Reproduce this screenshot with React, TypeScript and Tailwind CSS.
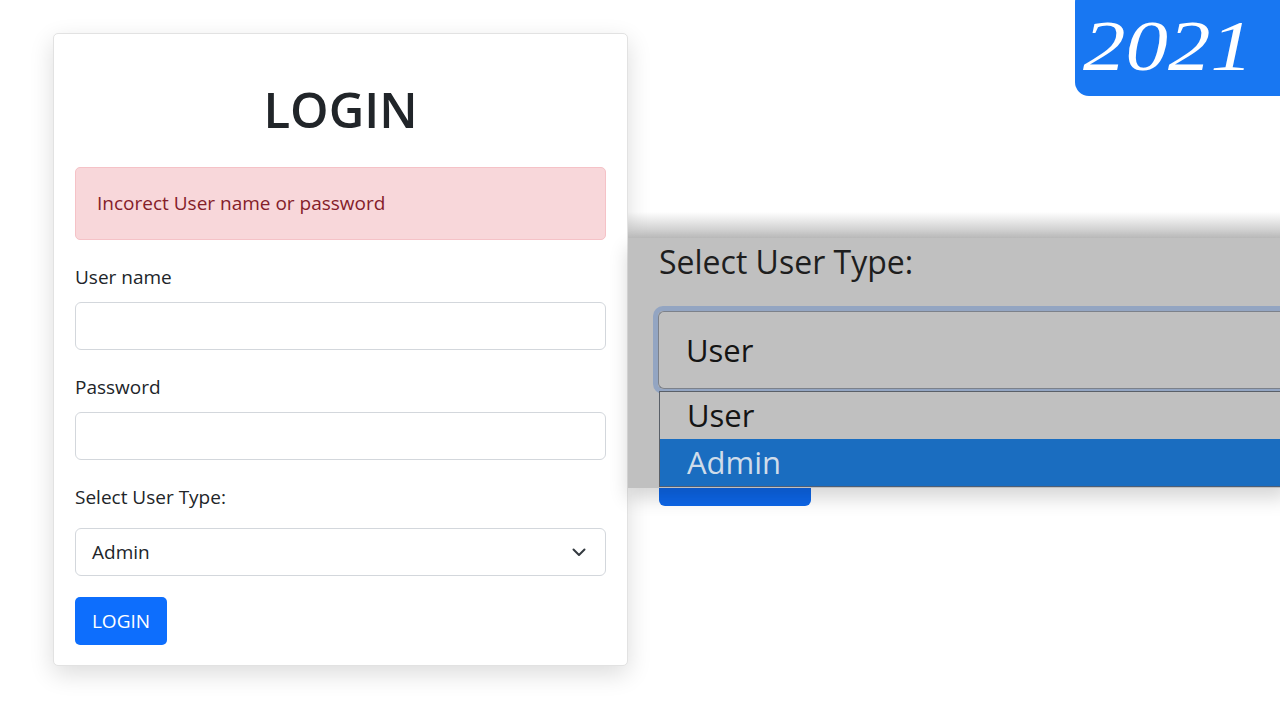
import React from "react";

const font = { fontFamily: '"Open Sans", "Noto Sans", sans-serif' };

function Chevron() {
  return (
    <svg width="16" height="16" viewBox="0 0 16 16" fill="none">
      <path d="M2.5 5.5l5.5 5.5 5.5-5.5" stroke="#343a40" strokeWidth="2" strokeLinecap="round" strokeLinejoin="round" />
    </svg>
  );
}

function Field({ label }: { label: string }) {
  return (
    <div className="flex flex-col">
      <label className="text-[19px] leading-[26px] text-[#212529]">{label}</label>
      <div className="mt-[12px] h-[48px] rounded-[6px] border border-[#d3d7dc] bg-white" />
    </div>
  );
}

function LoginCard() {
  return (
    <div className="ml-[53px] mt-[33px] flex h-[633px] w-[575px] flex-col rounded-[5px] border border-[#e2e2e2] bg-white px-[21px] shadow-[0_8px_24px_rgba(0,0,0,0.14)]">
      <h1 className="mt-[45px] text-center text-[49px] font-semibold leading-[60px] text-[#212529]">LOGIN</h1>
      <div className="mt-[28px] flex h-[73px] items-center rounded-[5px] border border-[#f5c2c7] bg-[#f8d7da] px-[21px] text-[19px] text-[#842029]">
        Incorect User name or password
      </div>
      <div className="mt-[24px] flex flex-col gap-[24px]">
        <Field label="User name" />
        <Field label="Password" />
        <div className="flex flex-col">
          <label className="text-[19px] leading-[26px] text-[#212529]">Select User Type:</label>
          <div className="mt-[18px] flex h-[48px] items-center justify-between rounded-[6px] border border-[#d3d7dc] bg-white pl-[16px] pr-[18px] text-[19px] text-[#212529]">
            <span>Admin</span>
            <Chevron />
          </div>
        </div>
      </div>
      <button className="mt-[21px] flex h-[48px] w-[92px] items-center justify-center rounded-[5px] bg-[#0d6efd] text-[19px] text-white">
        LOGIN
      </button>
    </div>
  );
}

function ZoomInset() {
  return (
    <>
      <div className="absolute left-[659px] top-[470px] h-[36px] w-[152px] rounded-[6px] bg-[#0d66e8]" />
      <div className="absolute left-[628px] top-[212px] h-[26px] w-[660px] bg-gradient-to-b from-[rgba(192,192,192,0)] to-[#bcbcbc]" />
      <div className="absolute left-[628px] top-[238px] flex h-[250px] w-[660px] flex-col bg-[#c0c0c0] pl-[31px] shadow-[0_10px_18px_rgba(0,0,0,0.16)]">
        <div className="mt-[4px] text-[32px] leading-[40px] text-[#1e1e1e]">Select User Type:</div>
        <div className="-ml-[6px] mt-[24px] rounded-l-[10px] border-[5px] border-r-0 border-[#93a5c2]">
          <div className="flex h-[78px] items-center rounded-l-[6px] border border-r-0 border-[#7c818a] bg-[#c0c0c0] pl-[27px] text-[31px] text-[#141414]">
            User
          </div>
        </div>
        <div className="-mt-[3px] flex flex-col border-l border-t border-[#5a6068]">
          <div className="flex h-[47px] items-center bg-[#c0c0c0] pl-[27px] text-[31px] text-[#141414]">User</div>
          <div className="flex h-[48px] items-center border-b border-[#4d5f78] bg-[#1a6dc0] pl-[27px] text-[31px] text-[#cfdcea]">Admin</div>
        </div>
      </div>
    </>
  );
}

export default function App() {
  return (
    <div className="relative h-[720px] w-[1280px] overflow-hidden bg-white" style={font}>
      <LoginCard />
      <ZoomInset />
      <div className="absolute left-[1075px] top-[-12px] flex h-[108px] w-[220px] items-center rounded-[14px] bg-[#1877f2] pl-[8px] pt-[8px]">
        <span
          className="origin-left scale-x-[1.18] text-[72px] italic leading-none text-white"
          style={{ fontFamily: '"Liberation Serif", serif' }}
        >
          2021
        </span>
      </div>
    </div>
  );
}
